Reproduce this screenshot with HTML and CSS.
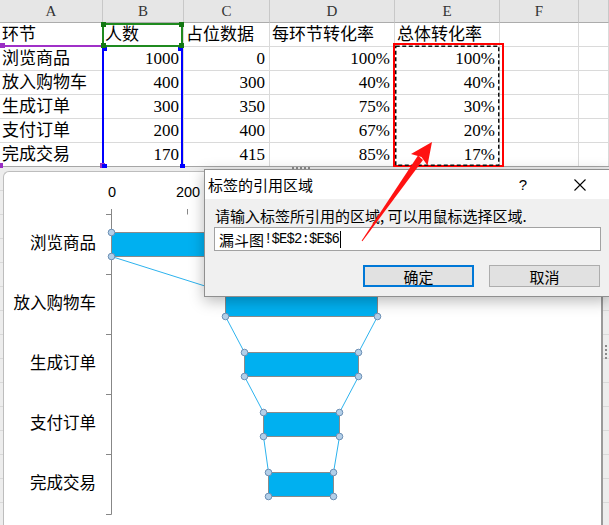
FILE: index.html
```html
<!DOCTYPE html>
<html lang="zh-CN">
<head>
<meta charset="utf-8">
<title>漏斗图</title>
<link rel="stylesheet" href="styles.css">
</head>
<body>
<div class="sheet">
  <div class="grid">
    <div class="ch">A</div><div class="ch">B</div><div class="ch">C</div><div class="ch">D</div><div class="ch">E</div><div class="ch">F</div><div class="ch"></div>

    <div class="c">环节</div><div class="c">人数</div><div class="c">占位数据</div><div class="c">每环节转化率</div><div class="c">总体转化率</div><div class="c"></div><div class="c"></div>
    <div class="c">浏览商品</div><div class="c num">1000</div><div class="c num">0</div><div class="c num">100%</div><div class="c num">100%</div><div class="c"></div><div class="c"></div>
    <div class="c">放入购物车</div><div class="c num">400</div><div class="c num">300</div><div class="c num">40%</div><div class="c num">40%</div><div class="c"></div><div class="c"></div>
    <div class="c">生成订单</div><div class="c num">300</div><div class="c num">350</div><div class="c num">75%</div><div class="c num">30%</div><div class="c"></div><div class="c"></div>
    <div class="c">支付订单</div><div class="c num">200</div><div class="c num">400</div><div class="c num">67%</div><div class="c num">20%</div><div class="c"></div><div class="c"></div>
    <div class="c">完成交易</div><div class="c num">170</div><div class="c num">415</div><div class="c num">85%</div><div class="c num">17%</div><div class="c"></div><div class="c"></div>
  </div>
  <div class="filler"></div>
</div>

<div class="sel sel-purple">
  <span class="hd hd-purple hp-a"></span>
</div>
<div class="sel sel-blue">
  <span class="hd hd-blue hb-tl"></span><span class="hd hd-blue hb-tr"></span>
</div>
<div class="sel sel-green">
  <span class="hd hd-green hg-tl"></span><span class="hd hd-green hg-tr"></span>
  <span class="hd hd-green hg-bl"></span><span class="hd hd-green hg-br"></span>
</div>

<div class="chart-frame">
  <div class="chart">
    <svg class="plot" width="597" height="354" viewBox="4 172 597 354">
      <g class="axis">
        <path d="M111.5 209V514.5 M106 214.5H111.5 M106 274.5H111.5 M106 334.5H111.5 M106 394.5H111.5 M106 454.5H111.5 M106 514.5H111.5 M187.5 209V214.5 M263.5 209V214.5 M339.5 209V214.5 M415.5 209V214.5 M491.5 209V214.5"/>
      </g>
      <g class="vals">
        <text x="112" y="192">0</text>
        <text x="188" y="192">200</text>
      </g>
      <g class="cats">
        <text x="96" y="242">浏览商品</text>
        <text x="96" y="302">放入购物车</text>
        <text x="96" y="362">生成订单</text>
        <text x="96" y="422">支付订单</text>
        <text x="96" y="482">完成交易</text>
      </g>
      <g class="links">
        <path d="M111.5 256.5L225.5 292.5 M225.5 316.5L244.5 352.5 M244.5 376.5L263.5 412.5 M263.5 436.5L268.5 472.5"/>
        <path d="M491.5 256.5L377.5 292.5 M377.5 316.5L358.5 352.5 M358.5 376.5L339.5 412.5 M339.5 436.5L333.5 472.5"/>
      </g>
      <g class="bars">
        <rect x="111.5" y="232.5" width="380" height="24"/>
        <rect x="225.5" y="292.5" width="152" height="24"/>
        <rect x="244.5" y="352.5" width="114" height="24"/>
        <rect x="263.5" y="412.5" width="76" height="24"/>
        <rect x="268.5" y="472.5" width="65" height="24"/>
      </g>
      <g class="pts">
        <circle cx="111.5" cy="232.5" r="3.3"/><circle cx="111.5" cy="256.5" r="3.3"/>
        <circle cx="491.5" cy="232.5" r="3.3"/><circle cx="491.5" cy="256.5" r="3.3"/>
        <circle cx="225.5" cy="292.5" r="3.3"/><circle cx="225.5" cy="316.5" r="3.3"/>
        <circle cx="377.5" cy="292.5" r="3.3"/><circle cx="377.5" cy="316.5" r="3.3"/>
        <circle cx="244.5" cy="352.5" r="3.3"/><circle cx="244.5" cy="376.5" r="3.3"/>
        <circle cx="358.5" cy="352.5" r="3.3"/><circle cx="358.5" cy="376.5" r="3.3"/>
        <circle cx="263.5" cy="412.5" r="3.3"/><circle cx="263.5" cy="436.5" r="3.3"/>
        <circle cx="339.5" cy="412.5" r="3.3"/><circle cx="339.5" cy="436.5" r="3.3"/>
        <circle cx="268.5" cy="472.5" r="3.3"/><circle cx="268.5" cy="496.5" r="3.3"/>
        <circle cx="333.5" cy="472.5" r="3.3"/><circle cx="333.5" cy="496.5" r="3.3"/>
      </g>
    </svg>
  </div>
  <span class="grip grip-top"></span>
  <span class="grip grip-right"></span>
</div>

<div class="sel-foot">
  <span class="hd hd-purple hp-b1"></span><span class="hd hd-purple hp-b2"></span>
  <span class="hd hd-blue hb-b1"></span><span class="hd hd-blue hb-b2"></span>
</div>

<div class="dialog">
  <div class="dlg-title">
    <span class="dlg-caption">标签的引用区域</span>
    <span class="dlg-help">?</span>
    <span class="dlg-close"><svg width="12" height="12" viewBox="0 0 12 12"><path d="M0.5 0.5L11.5 11.5M11.5 0.5L0.5 11.5" stroke="#000" stroke-width="1.1" fill="none"/></svg></span>
  </div>
  <div class="dlg-body">
    <div class="dlg-prompt">请输入标签所引用的区域, 可以用鼠标选择区域.</div>
    <div class="dlg-input"><span class="in-cjk">漏斗图</span><span class="in-mono">!$E$2:$E$6</span><span class="caret"></span></div>
    <div class="dlg-buttons">
      <button class="btn btn-default">确定</button>
      <button class="btn">取消</button>
    </div>
  </div>
</div>

<svg class="annot" width="609" height="525" viewBox="0 0 609 525">
  <rect x="394" y="44" width="109" height="122" fill="none" stroke="#ff0000" stroke-width="2"/>
  <rect x="395.75" y="46.25" width="103" height="119" fill="none" stroke="#111" stroke-width="1.5" stroke-dasharray="4 2.5"/>
  <polygon points="432,142 427.5,165.5 421.5,157 411,154" fill="#ff1212"/>
  <polygon points="423,160 418,155.5 361.6,240.7 362.4,241.3" fill="#ff1212"/>
</svg>
</body>
</html>
```

FILE: styles.css
```css
* { box-sizing: border-box; }

html, body {
  margin: 0;
  padding: 0;
}

body {
  width: 609px;
  height: 525px;
  overflow: hidden;
  position: relative;
  background: #fff;
  font-family: "Liberation Serif", "Noto Sans CJK SC", serif;
  color: #000;
}

/* ---------- spreadsheet ---------- */
.sheet {
  display: flex;
  flex-direction: column;
}

.grid {
  display: grid;
  grid-template-columns: 103px 81px 86px 125px 105px 79px 1fr;
  grid-template-rows: 23px;
  grid-auto-rows: 24px;
}

.ch {
  background: #e6e6e6;
  border-right: 1px solid #c8c8c8;
  border-bottom: 1px solid #acacac;
  text-align: center;
  font-size: 15px;
  line-height: 22px;
  color: #333;
}

.c {
  border-right: 1px solid #dadada;
  border-bottom: 1px solid #dadada;
  font-size: 17px;
  line-height: 23px;
  padding: 0 2px;
  white-space: nowrap;
}

.num {
  text-align: right;
  padding-right: 4px;
}

.filler {
  height: 358px;
  background: repeating-linear-gradient(to bottom, transparent 0 23px, #dadada 23px 24px);
}

/* ---------- chart data-range highlights ---------- */
.sel { position: absolute; }

.sel-green {
  left: 102px;
  top: 23px;
  width: 81px;
  height: 24px;
  border: 2px solid #1f8a1f;
}

.sel-blue {
  left: 102px;
  top: 46px;
  width: 81px;
  height: 121px;
  border-left: 2px solid #0000ff;
  border-right: 2px solid #0000ff;
}

.sel-purple {
  left: 0;
  top: 45px;
  width: 103px;
  height: 2px;
  background: #a030c8;
}

.hd {
  position: absolute;
  width: 5px;
  height: 5px;
}

.hd-green { background: #147814; }
.hd-blue { background: #0000ff; height: 4px; }
.hd-purple { background: #9a2ec4; }

.hg-tl { left: -3px; top: -3px; }
.hg-tr { right: -3px; top: -3px; }
.hg-bl { left: -3px; bottom: -3px; }
.hg-br { right: -3px; bottom: -3px; }

.hb-tl { left: -2px; top: 1px; }
.hb-tr { right: -2px; top: 1px; }

.hp-a { left: 0; top: -2px; }

.sel-foot {
  position: absolute;
  left: 0;
  top: 163px;
  width: 190px;
  height: 5px;
}

.hp-b1 { left: 0; top: 0; width: 3px; }
.hp-b2 { left: 100px; top: 0; width: 5px; }
.hb-b1 { left: 102px; top: 1px; }
.hb-b2 { left: 180px; top: 1px; }

/* ---------- floating chart ---------- */
.chart-frame {
  position: absolute;
  left: 0;
  top: 166px;
  width: 609px;
  height: 359px;
  overflow: hidden;
  border-top: 1px solid #a6a6a6;
  background: rgba(214, 214, 214, 0.45);
  padding: 4px 6px 0 3px;
}

.chart {
  height: 360px;
  background: #fff;
  border: 1px solid #bdbdbd;
  border-right: 2px solid #9a9a9a;
  border-top-left-radius: 6px;
  overflow: hidden;
}

.plot {
  display: block;
}

.axis path {
  stroke: #878787;
  stroke-width: 1;
  fill: none;
}

.vals text {
  font-family: "Liberation Sans", Arial, sans-serif;
  font-size: 14.5px;
  text-anchor: middle;
  dominant-baseline: central;
  fill: #000;
}

.cats text {
  font-family: "Noto Sans CJK SC", sans-serif;
  font-size: 16.5px;
  text-anchor: end;
  dominant-baseline: central;
  fill: #000;
}

.links path {
  stroke: #2db3ee;
  stroke-width: 1;
  fill: none;
}

.bars rect {
  fill: #00b0f0;
  stroke: #8b8b8b;
  stroke-width: 1;
}

.pts circle {
  fill: #b3cfe8;
  stroke: #6b8fb4;
  stroke-width: 1;
}

.grip {
  position: absolute;
}

.grip-top {
  left: 292px;
  top: 0;
  width: 18px;
  height: 2px;
  border-top: 2px dotted #8a8a8a;
}

.grip-right {
  left: 605px;
  top: 178px;
  width: 2px;
  height: 14px;
  border-left: 2px dotted #8a8a8a;
}

/* ---------- dialog ---------- */
.dialog {
  position: absolute;
  left: 204px;
  top: 169px;
  width: 406px;
  height: 128px;
  border: 1px solid #8f8f8f;
  background: #f0f0f0;
  box-shadow: 0 4px 14px rgba(0, 0, 0, 0.28);
  font-family: "Noto Sans CJK SC", sans-serif;
  display: flex;
  flex-direction: column;
}

.dlg-title {
  height: 29px;
  background: #fff;
  display: flex;
  align-items: center;
  font-size: 15px;
}

.dlg-caption {
  flex: 1;
  padding-left: 3px;
}

.dlg-help {
  width: 46px;
  margin-right: 11px;
  text-align: center;
  font-family: "Liberation Sans", sans-serif;
  font-size: 15px;
}

.dlg-close {
  width: 46px;
  margin-right: 6px;
  display: flex;
  justify-content: center;
}

.dlg-body {
  flex: 1;
  padding: 7px 8px 0 9px;
}

.dlg-prompt {
  font-size: 15px;
  line-height: 20px;
  padding-left: 1px;
  white-space: nowrap;
}

.dlg-input {
  margin-top: 1px;
  height: 24px;
  background: #fff;
  border: 1px solid #a2a2a2;
  display: flex;
  align-items: center;
  padding-left: 4px;
}

.in-cjk {
  font-size: 15px;
}

.in-mono {
  font-family: "Liberation Mono", monospace;
  font-size: 14px;
  letter-spacing: -0.9px;
}

.caret {
  width: 1px;
  height: 17px;
  background: #000;
  margin-left: 1px;
}

.dlg-buttons {
  display: flex;
  justify-content: flex-end;
  gap: 15px;
  margin-top: 14px;
  padding-right: 1px;
}

.btn {
  width: 111px;
  height: 22px;
  background: #e1e1e1;
  border: 1px solid #adadad;
  font-family: "Noto Sans CJK SC", sans-serif;
  font-size: 15px;
  color: #000;
  padding: 0;
  display: flex;
  align-items: center;
  justify-content: center;
}

.btn-default {
  border: 2px solid #0078d7;
}

/* ---------- annotations ---------- */
.annot {
  position: absolute;
  left: 0;
  top: 0;
  pointer-events: none;
}
```
